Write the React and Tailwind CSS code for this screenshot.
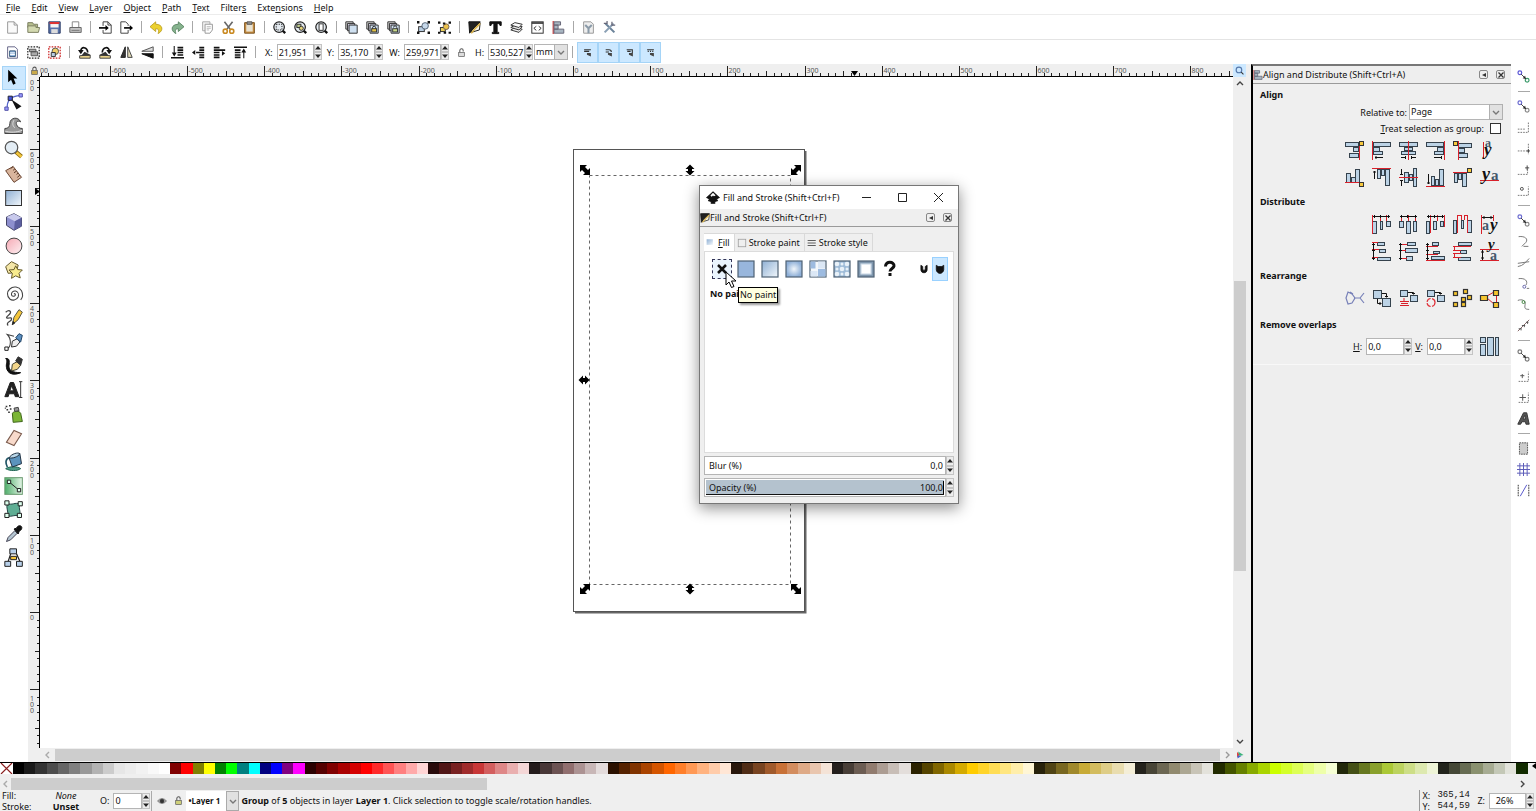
import { useState } from "react";
import clsx from "clsx";

const PALETTE = (
  "000000 1a1a1a 333333 4d4d4d 666666 808080 999999 b3b3b3 cccccc e6e6e6 ececec f2f2f2 f9f9f9 ffffff " +
  "800000 ff0000 808000 ffff00 008000 00ff00 008080 00ffff 000080 0000ff 800080 ff00ff " +
  "2b0000 550000 800000 aa0000 d40000 ff0000 ff2a2a ff5555 ff8080 ffaaaa ffd5d5 " +
  "280b0b 501616 782121 a02c2c c83737 d35f5f de8787 e9afaf f4d7d7 " +
  "241c1c 483737 6c5353 916f6f ac9393 c8b7b7 e3dbdb " +
  "2b1100 552200 803300 aa4400 d45500 ff6600 ff7f2a ff9955 ffb380 ffccaa ffe6d5 " +
  "28170b 502d16 784421 a05a2c c87137 d38d5f deaa87 e9c6af f4e3d7 " +
  "241f1c 483e37 6c5d53 917c6f ac9d93 c8beb7 e3dedb " +
  "2b2200 554400 806600 aa8800 d4aa00 ffcc00 ffd42a ffdd55 ffe680 ffeeaa fff6d5 " +
  "28220b 504416 786721 a0892c c8ab37 d3bc5f decd87 e9ddaf f4eed7 " +
  "24221c 484537 6c6753 918a6f aca793 c8c4b7 e3e2db " +
  "222b00 445500 668000 88aa00 aad400 ccff00 d4ff2a ddff55 e5ff80 eeffaa f6ffd5 " +
  "22280b 445016 677821 89a02c abc837 bcd35f cdde87 dde9af eef4d7 " +
  "22241c 454837 676c53 8a916f a7ac93 c4c8b7 e2e3db 112b00"
).split(" ");

const MENUS = [
  ["", "F", "ile"],
  ["", "E", "dit"],
  ["", "V", "iew"],
  ["", "L", "ayer"],
  ["", "O", "bject"],
  ["", "P", "ath"],
  ["", "T", "ext"],
  ["Filter", "s", ""],
  ["Exte", "n", "sions"],
  ["", "H", "elp"],
];

// ---------- icon helpers ----------

function Svg({ children, className = "w-[13px] h-[13px]", box = 16 }) {
  return (
    <svg viewBox={`0 0 ${box} ${box}`} className={clsx("shrink-0 overflow-visible", className)} fill="none" stroke="#333" strokeWidth="1.2">
      {children}
    </svg>
  );
}

const Padlock = ({ fill = "#c9a94a", open }) => (
  <Svg className="w-[9px] h-[9px]">
    <path d={open ? "M5 8V4.500a3 3 0 0 1 6 0V6" : "M5 8V5a3 3 0 0 1 6 0v3"} stroke="#555" strokeWidth="1.800" />
    <rect x="3" y="8" width="10" height="7" fill={fill} stroke="#555" />
  </Svg>
);

const magnifier = (inner) => (
  <>
    <circle cx="7.500" cy="7.500" r="6.500" fill="#e4eaf0" stroke="#222" strokeWidth="1.500" />
    {inner}
    <path d="M12 12l3 3" stroke="#111" strokeWidth="3" />
  </>
);

const stackedSquares = (inner) => (
  <>
    <path d="M1 1h9v9H1z" fill="#ddd" />
    <path d="M3 3h9v9H3z" fill="#ccd" />
    <path d="M5 5h10v10H5z" fill="#cfe0f0" />
    {inner}
  </>
);

const rotateArt = (flip) => (
  <g transform={flip ? "translate(16 0) scale(-1 1)" : undefined}>
    <path d="M2 15v-3l13-1v4z" fill="#e8d28a" stroke="#444" />
    <path d="M4 12l4-5 6 3 1 2z" fill="#333" stroke="none" />
    <path d="M3.500 6c0-6 8-5 8.500 2" stroke="#111" strokeWidth="2" />
    <path d="M0 5h7l-3.500 5z" fill="#111" stroke="none" />
  </g>
);

const commandIcons = [
  ["New", <><path d="M2 1h8l4 4v10H2z" fill="#fafafa" stroke="#999" /><path d="M10 1v4h4" stroke="#999" /></>],
  ["Open", <><path d="M1 2h6l1 2h5v4H1z" fill="#b7bf8e" stroke="#7b7f62" /><path d="M1 14V6h10v2h4.500L14 14z" fill="#d3d9b0" stroke="#7b7f62" /></>],
  ["Save", <><path d="M1 1h14v14H1z" fill="#5873ab" stroke="#2a3b66" /><path d="M3 2h10v6H3z" fill="#f4f4f4" stroke="none" /><path d="M2 2.500h12" stroke="#d33" strokeWidth="2.500" /><path d="M4 10h8v5H4z" fill="#ddd" stroke="none" /></>],
  ["Print", <><path d="M4 8V1h8v7" fill="#fff" stroke="#888" /><path d="M1 8h14v6H1z" fill="#c5c5c5" stroke="#666" /><path d="M3 11.500h10" stroke="#777" /></>],
  null,
  ["Import", <><path d="M5 1h6l4 4v10H5V11M5 6V1M11 1v4h4" stroke="#444" /><path d="M0 8.500h9" stroke="#000" strokeWidth="2" /><path d="M8 5l4 3.500L8 12z" fill="#000" stroke="none" /></>],
  ["Export", <><path d="M10 11v4H1V1h6l3 3v2" stroke="#444" /><path d="M5 8.500h8" stroke="#000" strokeWidth="2" /><path d="M12 5l4 3.500L12 12z" fill="#000" stroke="none" /></>],
  null,
  ["Undo", <path d="M7 1L0 7l7 6v-3.500c4 0 4 2 3 6C17 12 16 4 7 4z" fill="#ecd12f" stroke="#b89a1b" strokeWidth="1" />],
  ["Redo", <path d="M9 1l7 6-7 6v-3.500c-4 0-4 2-3 6C-1 12 0 4 9 4z" fill="#86b38e" stroke="#4d7a56" strokeWidth="1" />],
  null,
  ["Copy", <><path d="M2 1h9v11H2z" fill="#f2f2f2" stroke="#aaa" /><path d="M5 4h9v7l-3 4H5z" fill="#fff" stroke="#999" /><path d="M7 7h5M7 9h5M7 11h3" stroke="#bbb" /></>],
  ["Cut", <><path d="M3 1l7 9M13 1L6 10" stroke="#666" strokeWidth="2" /><circle cx="4" cy="12.500" r="2.500" stroke="#c98a22" strokeWidth="2" /><circle cx="12" cy="12.500" r="2.500" stroke="#c98a22" strokeWidth="2" /></>],
  ["Paste", <><path d="M2 2h12v13H2z" fill="#c98f42" stroke="#7a5320" /><path d="M4 4h8v9H4z" fill="#e8e2d2" stroke="none" /><path d="M5 1h6v3H5z" fill="#999" stroke="#555" /></>],
  null,
  ["Zoom selection", magnifier(<rect x="4" y="4" width="7" height="7" stroke="#222" strokeDasharray="1.500 1.500" />)],
  ["Zoom drawing", magnifier(<><rect x="3.500" y="4" width="5" height="4" fill="#bcc88a" /><circle cx="9" cy="9" r="2.500" fill="#e5d47b" /></>)],
  ["Zoom page", magnifier(<rect x="5" y="3.500" width="5" height="8" fill="#fff" />)],
  null,
  ["Duplicate", stackedSquares(null)],
  ["Clone", stackedSquares(<><path d="M8 10V8.500a2 2 0 0 1 4 0V10" /><rect x="7" y="9.500" width="6" height="4" fill="#e2c347" /></>)],
  ["Unlink clone", stackedSquares(<><path d="M8 8a2 2 0 0 1 4 0v2" /><rect x="7" y="9.500" width="6" height="4" fill="#c9d98b" /></>)],
  null,
  ["Group", <><rect x="2" y="7" width="7" height="6" fill="#b8cde2" /><circle cx="10" cy="6" r="4" fill="#c6d8ea" stroke="#567" /><path d="M0 1.500h3M13 1.500h3M0 14.500h3M13 14.500h3" strokeWidth="3" stroke="#111" /></>],
  ["Ungroup", <><rect x="3" y="8" width="6" height="5" fill="#e9cf5a" /><circle cx="10" cy="7" r="3.500" fill="#edc24a" stroke="#765" /><path d="M0 2h3M6 3h3M13 2h3M0 14.500h3M7 14.500h3M13 14.500h3" strokeWidth="2.500" stroke="#111" /></>],
  null,
  ["Fill and Stroke", <><path d="M4 2h11l-1 9-10 3z" fill="#f8f6ea" stroke="#222" /><path d="M1 1h14L6 10l-4 5z" fill="#222" stroke="#111" /><path d="M15 3L9 9l-5 6" stroke="#d9b24a" strokeWidth="2" /></>],
  ["Text and Font", <path d="M1 1h14v4.500h-1.500C13 3.500 12 3 10 3v9.500c0 1 .5 1.500 2 1.500v1.500H4V14c1.500 0 2-.5 2-1.500V3C4 3 3 3.500 2.500 5.500H1z" fill="#111" stroke="#111" />],
  ["Layers", <><path d="M1 11l5-3 9 2-4 4z" fill="#eee" /><path d="M1 8l5-3 9 2-4 4z" fill="#e4e4e4" /><path d="M1 5l5-3 9 2-4 4z" fill="#fafafa" /></>],
  ["XML Editor", <><rect x="1" y="1" width="14" height="14" fill="#fff" /><path d="M1 2.500h14" strokeWidth="2" /><path d="M6.500 6.500L3.500 9l3 2.500M9.500 6.500l3 2.500-3 2.500" /></>],
  ["Align and Distribute", <><path d="M1.500 0v16" stroke="#c33" strokeWidth="1.500" /><path d="M2.500 1h8v4h-8zM2.500 5h5v5h-5zM2.500 10h12v5h-12z" fill="#a8b6c2" stroke="#667" /></>],
  null,
  ["Document Properties", <><path d="M2 1h9l3 3v11H2z" fill="#eee" stroke="#999" /><path d="M4 5l4 4 4-4M8 9v6" stroke="#8a9aa8" strokeWidth="2.500" /></>],
  ["Preferences", <><path d="M3 3l11 11" stroke="#6b8299" strokeWidth="2.500" /><path d="M13 3L2 14" stroke="#8aa0b5" strokeWidth="2.500" /><path d="M11 1v4h4M1 3h4V0" stroke="#667" strokeWidth="1.500" /></>],
];

const rows = (d) => <path d={d} stroke="#111" strokeWidth="2" />;

const selectIcons = [
  ["Select all", <><path d="M2 1h9l3 3v11H2z" fill="#fff" stroke="#668" /><path d="M4.500 6h7v7h-7z" fill="#8fb4de" stroke="#357" /><path d="M5 8.500h6M5 10.500h6" stroke="#fff" /></>],
  ["Select all layers", <><rect x="1" y="1" width="14" height="14" strokeDasharray="2 1.500" stroke="#222" strokeWidth="1.500" /><path d="M3 4h8v3H3zM5 7h8v5H5z" fill="#aaa" stroke="#555" /></>],
  ["Deselect", <><rect x="1" y="1" width="14" height="14" strokeDasharray="2 1.500" stroke="#c22" strokeWidth="1.500" /><circle cx="9" cy="6.500" r="4" fill="#f0cf6a" stroke="#555" /><path d="M4 13V8h5v5z" fill="#b8cde2" /></>],
  null,
  ["Rotate 90 CCW", rotateArt(false)],
  ["Rotate 90 CW", rotateArt(true)],
  ["Flip horizontal", <><path d="M6.500 1v13H1z" fill="#333" stroke="#222" /><path d="M9.500 1v13H15z" fill="#e3dcb8" stroke="#444" /></>],
  ["Flip vertical", <><path d="M15 6.500V1L1 6.500z" fill="#ddd" stroke="#555" /><path d="M15 9.500V15L1 9.500z" fill="#111" stroke="#111" /></>],
  null,
  ["Lower to bottom", <>{rows("M8 2h7M8 5h7M8 8h7M8 11h7M0 14.500h16")}<path d="M4 0v10" strokeWidth="1.500" /><path d="M1 8h6l-3 5z" fill="#111" stroke="none" /></>],
  ["Lower", <>{rows("M9 2h6M9 5h6M5 8h10M9 11h6M9 14h6")}<path d="M0 8l4-3v6z" fill="#111" stroke="none" /></>],
  ["Raise", <>{rows("M1 2h7M1 5h14M1 8h7M1 11h7M1 14h7")}<path d="M11 12l4-3-4-3z" fill="#111" stroke="none" /></>],
  ["Raise to top", <>{rows("M0 1.500h16M1 5h7M1 8h7M1 11h7M1 14h7")}<path d="M12 6v9" strokeWidth="1.500" /><path d="M9 8h6l-3-5z" fill="#111" stroke="none" /></>],
];

const affectIcons = [
  ["Scale stroke width", "M2 3h12M2 6h9"],
  ["Scale rounded corners", "M3 3h6a4 4 0 0 1 4 4M3 7h6"],
  ["Move gradients", "M3 3h10v6M4 6h6"],
  ["Move patterns", "M2 3h12M3 6h2M7 6h2M11 6h2"],
];

const toolIcons = [
  ["Select", <path d="M5 2v15l3.500-3 2.500 6 3-1.300-2.500-6H16z" fill="#000" stroke="none" />],
  ["Edit nodes", <><path d="M4 20C3 10 8 5 20 4" stroke="#5566cc" strokeWidth="1.500" /><path d="M5 5h5v5H5z" fill="#4455dd" stroke="#223" /><path d="M1 18h4v4H1zM18 2h4v4h-4z" fill="#99f" stroke="#55a" /><path d="M9 9l12 8-6 4z" fill="#111" stroke="none" /></>],
  ["Tweak", <><path d="M1 21v-6c4 0 6-2 6-6 0-7 10-9 13-2-4-2-6 0-5 3s3 5 7 5v6z" fill="#999" stroke="#444" /><path d="M1 18c6 2 14 2 21-1M12 5c-2 3-2 7 1 9" stroke="#ddd" /></>],
  ["Zoom", <><path d="M14 14l7 6" stroke="#8a6a10" strokeWidth="5" /><path d="M15 15l6 5" stroke="#f2c53d" strokeWidth="3" /><circle cx="9" cy="9" r="7.500" fill="#e3edf5" stroke="#555" strokeWidth="1.500" /></>],
  ["Measure", <><path d="M2 8l9-5 10 13-9 6z" fill="#d9b59d" stroke="#6b4531" /><path d="M11 3l-3 2.500M13 6l-2 1.500M15 8.500l-3 2M17 11l-2 1.500M19 13.500l-3 2.500" stroke="#5b3a28" /></>],
  ["Rectangle", <rect x="2" y="3" width="19" height="18" fill="url(#blueGrad)" stroke="#333" />],
  ["3D box", <><path d="M3 6l9-4 9 5v10l-9 5-9-6z" fill="#8d8fce" stroke="#446" /><path d="M3 6l9-4 9 5-8 4z" fill="#c9caec" stroke="none" /><path d="M13 11l8-4v10l-9 5z" fill="#5c5f9f" stroke="none" /></>],
  ["Ellipse", <circle cx="12" cy="12" r="9.500" fill="url(#pinkGrad)" stroke="#444" strokeWidth="1.200" />],
  ["Star", <><path d="M2 8l7-6 8 4-2 9-10 1z" fill="#f5e7a8" stroke="#665a2a" /><path d="M14 7l2.500 4.500 5.500.5-4 4 1.500 5.500-5.500-2.500-5 3 1-6-4-4 6-.5z" fill="#f8ec8e" stroke="#665a2a" /></>],
  ["Spiral", <path d="M12 12c1-1 2 0 1.500 1.500-1 2-4 1.500-4.500-.5-.5-3 2-5 5-4.500 3 1 4 4 3 7-2 4-7 5-10 2.500-4-3.500-3.500-9 0-12 4-4 11-3 14 2 2 4 1.500 8-1 11" stroke="#444" strokeWidth="1.300" />],
  ["Pencil", <><path d="M2 5c5-4 8 0 4 3s-4 5 0 4 4 2 1 4-4 3-2 5" stroke="#444" strokeWidth="1.500" /><path d="M10 20l2-9 6-9 4 3-5 9z" fill="#f4c53a" stroke="#554" /><path d="M10 20l1-4 2 2z" fill="#111" /></>],
  ["Bezier", <><path d="M3 20C9 19 9 8 4 3l8 2" stroke="#444" strokeWidth="1.300" /><path d="M1 18h4v4H1z" fill="#fff" stroke="#222" /><path d="M9 18l1-7 6-3 3 4-4 5z" fill="#eee" stroke="#333" /><path d="M14 7l4-5 4 2-2 8z" fill="#5b8fc0" stroke="#246" /></>],
  ["Calligraphy", <><path d="M2 3c6-1 4 6 4 10s4 7 14 7c-9 4-16 1-17-6C2 9 5 6 2 3z" fill="#111" stroke="#111" /><path d="M9 18l1-8 7-4 3 5-4 5z" fill="#f2d58a" stroke="#443" /><path d="M14 6l3-5 5 3-2 7z" fill="#333" /></>],
  ["Text", <><path d="M1 20L7.500 3h4L18 20h-4.500l-1-3.500H6L5 20zM7 13h4.500L9.300 6.500z" fill="#222" stroke="#222" /><path d="M18 2h4M20 2v19M18 21h4" stroke="#333" /></>],
  ["Spray", <><path d="M10 11c3-3 8-3 10 0l2 10-11 1z" fill="#7cb636" stroke="#3f661b" /><path d="M12 5l5-1 1 4-5 1z" fill="#999" stroke="#444" /><path d="M2 3h2M6 2h2M3 7h2M7 6h2M5 10h2M1 5h1" stroke="#333" strokeWidth="1.800" /></>],
  ["Eraser", <path d="M3 17L12 3l9 4-9 14z" fill="#f8dacb" stroke="#7a5a4c" strokeWidth="1.300" />],
  ["Paint bucket", <><path d="M2 20c4-3 15-3 18 0-4 3-13 3-18 0z" fill="#4f9a86" stroke="#265" /><path d="M6 7l13-5 2 12-11 4z" fill="#5b93bd" stroke="#234" /><path d="M6 7C1 9 2 14 4 18" stroke="#256" strokeWidth="2" /><path d="M6 7c3-5 11-7 13-5-2 4-9 6-13 5z" fill="#b9d6e8" stroke="#234" /></>],
  ["Gradient", <><rect x="1" y="2" width="21" height="20" fill="url(#greenGrad)" stroke="#6a9a70" /><path d="M6 7l12 10" stroke="#222" /><path d="M4 5h4v4H4zM16 15h4v4h-4z" fill="#dfe" stroke="#222" /></>],
  ["Mesh", <><path d="M4 4c6 3 9-2 15 1-2 6 2 9-1 14-5-2-9 2-14 0 2-5-2-9 0-15z" fill="#5fae94" stroke="#244" /><path d="M1 1h5v5H1zM17 2h5v5h-5zM1 16h5v5H1zM16 16h5v5h-5z" fill="#dfe" stroke="#222" /></>],
  ["Dropper", <><path d="M3 21l2-5 8-8 3 3-8 8z" fill="#b5c6d2" stroke="#445" /><path d="M12 6l3-1c2-5 8-3 6 1-1 2-2 2-3 3l-1 3z" fill="#111" stroke="#111" /></>],
  ["Connector", <><path d="M8 7L5 16M15 7l4 9" stroke="#222" strokeWidth="1.500" /><path d="M7 1h8v6H7zM1 16h7v6H1zM15 16h7v6h-7z" fill="#b8d0ea" stroke="#222" /><path d="M8 10h7v4H8z" fill="#f3c33b" stroke="#222" /></>],
];

const dots = (d) => <path d={d} stroke="#777" strokeDasharray="2 1.300" />;
const nodePair = (a, b) => (
  <>
    <circle cx="3.500" cy="3.500" r="2.300" stroke={a} strokeWidth="1.500" />
    <circle cx="12.500" cy="12.500" r="2.300" stroke={b} strokeWidth="1.500" />
    <path d="M5 5l6 6" stroke="#444" />
    <path d="M10 7l1 4-4-1z" fill="#222" stroke="none" />
  </>
);

const snapIcons = [
  ["Enable snapping", nodePair("#5a55d6", "#3a9a6a")],
  null,
  ["Snap bounding boxes", nodePair("#6a6ad0", "#888")],
  ["Snap to edges", dots("M1 14h13V1M1 10h9")],
  ["Snap to corners", <>{dots("M1 11h13V1M14 11v4")}<path d="M12 11h4M14 9v4" stroke="#444" /></>],
  ["Snap edge midpoints", <>{dots("M1 14h12V8")}<path d="M10 6h5M12.500 3v6" stroke="#444" /></>],
  ["Snap centers", <>{dots("M1 14h13V3")}<circle cx="6" cy="6" r="1.800" stroke="#555" /></>],
  null,
  ["Snap nodes", nodePair("#6a6ad0", "#888")],
  ["Snap to paths", <path d="M2 2c8-1 12 3 9 7l-5 5M8 14h6" stroke="#777" />],
  ["Snap intersections", <path d="M1 13C8 12 10 8 15 3M1 9l14-2" stroke="#777" />],
  ["Snap cusp nodes", <><path d="M2 2c8-1 12 3 9 8M12 14h3" stroke="#777" /><circle cx="9" cy="12" r="1.800" stroke="#66a" /></>],
  ["Snap smooth nodes", <><path d="M1 3c5-2 10 0 9 5s0 6 5 6" stroke="#777" /><circle cx="8" cy="5" r="1.800" stroke="#484" /></>],
  ["Snap line midpoints", <><path d="M1 15L15 1" stroke="#866" /><path d="M2 12h3M6 8h4M11 4h3M5 14v-3M9 10V7M13 6V3" stroke="#555" /></>],
  null,
  ["Snap others", nodePair("#777", "#777")],
  ["Snap object centers", <>{dots("M2 14h12V2")}<path d="M4 7h5M6.500 5v5" stroke="#555" /></>],
  ["Snap rotation centers", <>{dots("M2 14h12V2")}<path d="M3 8h8M7 4v8" stroke="#555" /></>],
  ["Snap text baseline", <path d="M1 15L8 1h4l3 14h-4l-.5-3H6l-1.500 3zM7.500 8.500h3L9.600 4z" fill="#555" stroke="#333" />],
  null,
  ["Snap page border", <rect x="3" y="1" width="10" height="14" fill="#ccc" stroke="#555" strokeDasharray="2 1" />],
  ["Snap to grids", <path d="M0 3.500h16M0 8h16M0 12.500h16M3.500 0v16M8 0v16M12.500 0v16" stroke="#5a5ab8" strokeWidth="1.200" />],
  ["Snap to guides", <><path d="M1.500 1v14M14.500 1v14" stroke="#333" strokeDasharray="2 1" /><path d="M4 15l8-14" stroke="#55c" /></>],
];

// Bars, guide line, arrows and an anchor square: all the align glyphs share these
function BarIcon({ bars = [], red, black, anchor, children }) {
  return (
    <Svg className="w-[19px] h-[19px]" box={19}>
      {bars.map(([x, y, w, h], i) => (
        <rect key={i} x={x + 0.5} y={y + 0.5} width={w - 1} height={h - 1} fill="#bcd3e6" stroke="#35424d" strokeWidth="1" />
      ))}
      {red && <path d={red} stroke="#d8202a" strokeWidth="1" />}
      {black && <path d={black} stroke="#111" strokeWidth="1" />}
      {anchor && <rect x={anchor[0] + 0.5} y={anchor[1] + 0.5} width="4" height="4" fill="#f8c93c" stroke="#333" strokeWidth="1" />}
      {children}
    </Svg>
  );
}

const glyph = (ch, x, y, italic, size = 15) => (
  <text x={x} y={y} fontSize={size} fontWeight="bold" fontStyle={italic ? "italic" : "normal"} fontFamily="Liberation Serif, serif" fill={ch === "a" ? "#44586b" : "#111"} stroke="none">
    {ch}
  </text>
);

const alignRows = [
  [
    <BarIcon bars={[[0, 1, 14, 5], [8, 6, 6, 5], [4, 12, 10, 5]]} red="M14.500 0v19" anchor={[14, 0]} />,
    <BarIcon bars={[[1, 1, 18, 5], [1, 6, 7, 5], [1, 10, 10, 4]]} red="M.5 0v19" black="M3 16.500h8M4 15v3" />,
    <BarIcon bars={[[0, 1, 19, 5], [5, 6, 9, 4], [2, 10, 15, 4]]} red="M9.500 0v19" black="M2 16.500h5M12 16.500h5M6.500 15v3M12.500 15v3" />,
    <BarIcon bars={[[0, 1, 18, 5], [11, 6, 7, 5], [8, 10, 10, 4]]} red="M18.500 0v19" black="M8 16.500h8M15.500 15v3" />,
    <BarIcon bars={[[5, 2, 14, 5], [5, 7, 7, 5], [5, 12, 10, 5]]} red="M5.500 0v19" anchor={[0, 0]} />,
    <BarIcon red="M3.500 1v16">{glyph("a", 5, 6, false, 12)}{glyph("y", 4, 14, true, 17)}</BarIcon>,
  ],
  [
    <BarIcon bars={[[1, 5, 5, 10], [6, 9, 5, 6], [10, 1, 5, 14]]} red="M0 14.500h15" anchor={[14, 14]} />,
    <BarIcon bars={[[5, 1, 4, 10], [9, 1, 4, 7], [13, 1, 5, 17]]} red="M0 .5h19" black="M2.500 3v8M1 4h3" />,
    <BarIcon bars={[[5, 4, 5, 11], [10, 6, 4, 7], [14, 0, 4, 19]]} red="M0 9.500h19" black="M2.500 1v6M2.500 12v6M1 6.500h3M1 12.500h3" />,
    <BarIcon bars={[[5, 8, 4, 10], [9, 11, 4, 7], [13, 1, 5, 17]]} red="M0 18.500h19" black="M2.500 6v10M1 15h3" />,
    <BarIcon bars={[[1, 5, 4, 10], [5, 5, 4, 7], [9, 5, 5, 14]]} red="M0 4.500h15" anchor={[14, 0]} />,
    <BarIcon red="M0 12.500h19">{glyph("y", 2, 12, true, 18)}{glyph("a", 11, 12, false, 15)}</BarIcon>,
  ],
];

const harrow = "M1 1.500h17M2.500 0v3M16.500 0v3M8.500 0v3";
const varrow = "M1.500 1v17M0 2.500h3M0 16.500h3M0 8.500h3";
const distributeRows = [
  [
    <BarIcon bars={[[0, 6, 5, 13], [8, 6, 3, 9], [14, 6, 5, 6]]} red="M.5 0v19M8.500 0v6M14.500 0v6" black={harrow} />,
    <BarIcon bars={[[0, 6, 5, 7], [7, 6, 5, 13], [14, 6, 4, 11]]} red="M2.500 0v6M9.500 0v6M16.500 0v6" black={harrow} />,
    <BarIcon bars={[[0, 6, 4, 13], [7, 6, 4, 9], [14, 6, 4, 6]]} red="M4.500 0v18M11.500 0v6M18.500 0v12" black={harrow} />,
    <BarIcon bars={[[0, 5, 4, 14], [8, 5, 3, 9], [14, 5, 5, 13]]} red="M4.500 0v18M8.500 0v5M11.500 0v5M14.500 0v18M4 .5h4M11 .5h4" />,
    <BarIcon red="M1.500 0v19M13.500 0v6" black="M2 2.500h11M4 1v3M11 1v3">{glyph("a", 2, 15, false, 14)}{glyph("y", 10, 15, true, 17)}</BarIcon>,
  ],
  [
    <BarIcon bars={[[5, 0, 8, 4], [7, 7, 7, 4], [5, 15, 14, 4]]} red="M0 .5h6M0 7.500h7M0 15.500h6" black={varrow} />,
    <BarIcon bars={[[8, 0, 9, 4], [6, 6, 13, 5], [7, 14, 7, 5]]} red="M0 2.500h8M0 8.500h7M0 16.500h8" black={varrow} />,
    <BarIcon bars={[[6, 0, 7, 4], [7, 9, 7, 3], [5, 14, 14, 4]]} red="M0 4.500h12M0 12.500h12M0 18.500h19" black={varrow} />,
    <BarIcon bars={[[5, 0, 14, 4], [7, 8, 7, 4], [5, 15, 13, 4]]} red="M0 4.500h18M0 8.500h8M0 11.500h8M0 15.500h8M1.500 4v4M1.500 12v3" />,
    <BarIcon red="M0 7.500h19M0 18.500h19" black="M2.500 8v10M1 10h3M1 16h3">{glyph("y", 8, 7, true)}{glyph("a", 10, 18, false, 14)}</BarIcon>,
  ],
];

const rearrangeIcons = [
  <BarIcon><path d="M1 9l2-6 4 2 3 4-3 5-4 1zM9 9h6l4-5M15 9l4 5M5 3l3 2" stroke="#7780b8" /></BarIcon>,
  <BarIcon bars={[[1, 1, 9, 9], [10, 9, 9, 9]]} black="M5.500 10v4.500h4M10 4.500h4.500v4M8 13v3M13 7.500h3" />,
  <BarIcon bars={[[1, 1, 8, 7], [11, 6, 8, 7]]} black="M9 3.500h5.500v2M13 4.500h3" red="M5 9v3M1 12.500h9M2 14.500h7M1 16.500h9" />,
  <BarIcon bars={[[1, 1, 8, 7], [11, 6, 8, 7]]} black="M9 3.500h5.500v2M13 4.500h3"><circle cx="5" cy="13.500" r="4" stroke="#e03038" strokeDasharray="5 1.500" /></BarIcon>,
  <BarIcon>{[[0, 2], [10, 0], [8, 8], [14, 6], [0, 13], [8, 13]].map(([x, y]) => <rect key={x + "-" + y} x={x + 0.5} y={y + 0.5} width="4" height="4" fill="#f6c52e" stroke="#333" />)}</BarIcon>,
  <BarIcon red="M7 7l7-4M7 9l7 6M16.500 5v9"><path d="M.5 6.500h7v5h-7zM13.500 1.500h5v5h-5zM13.500 13.500h5v5h-5z" fill="#f6c52e" stroke="#333" /></BarIcon>,
];

// ---------- controls ----------

function Tri({ up }) {
  return (
    <svg viewBox="0 0 6 4" className="w-[6px] h-[4px] shrink-0" fill="#222">
      <path d={up ? "M3 0l3 3.500H0z" : "M3 4l3-3.500H0z"} />
    </svg>
  );
}

function Chevron({ dir = "down", color = "#777" }) {
  const d = { down: "M1 3l3 3 3-3", up: "M1 5l3-3 3 3", left: "M5 1L2 4l3 3", right: "M3 1l3 3-3 3" }[dir];
  return (
    <svg viewBox="0 0 8 8" className="w-2 h-2 pointer-events-none" fill="none" stroke={color} strokeWidth="1.400">
      <path d={d} />
    </svg>
  );
}

function Spinner() {
  return (
    <span className="flex w-2 shrink-0 flex-col self-stretch">
      {["Increase", "Decrease"].map((name) => (
        <button key={name} aria-label={name} className="flex flex-1 items-center justify-center border border-[#c4c4c4] bg-[#ececec]">
          <Tri up={name === "Increase"} />
        </button>
      ))}
    </span>
  );
}

function SpinField({ id, label, value, width = "w-[37px]", height = "h-4", className }) {
  return (
    <div className={clsx("flex items-center gap-1", className)}>
      <label htmlFor={id}>{label}</label>
      <div className={clsx("flex", height)}>
        <input id={id} defaultValue={value} className={clsx("min-w-0 border border-[#b5b5b5] bg-white pl-px outline-none", width)} />
        <Spinner />
      </div>
    </div>
  );
}

function Select({ id, value, width, className, ...rest }) {
  return (
    <div className={clsx("relative flex h-4", width, className)}>
      <select id={id} defaultValue={value} className="h-full w-full appearance-none border border-[#b5b5b5] bg-white pl-px leading-[14px] outline-none" {...rest}>
        <option>{value}</option>
      </select>
      <span className="pointer-events-none absolute inset-y-0 right-0 flex w-3.5 items-center justify-center border border-[#b0b0b0] bg-[#e1e1e1]">
        <Chevron />
      </span>
    </div>
  );
}

function IconButtons({ items, vertical }) {
  return items.map((item, i) =>
    item ? (
      <button key={i} aria-label={item[0]} className="flex h-[21px] w-[21px] shrink-0 items-center justify-center">
        <Svg>{item[1]}</Svg>
      </button>
    ) : (
      <Divider key={i} vertical={vertical} />
    )
  );
}

function Divider({ vertical }) {
  return (
    <span className={clsx("flex shrink-0 items-center justify-center", vertical ? "h-[9px] w-full" : "h-full w-[9px]")}>
      <span className={clsx("bg-[#a8a8a8]", vertical ? "h-px w-3" : "h-3 w-px")} />
    </span>
  );
}

function DockHeader({ title, icon }) {
  return (
    <div className="flex h-[18px] items-center border-b border-[#9a9a9a] pr-1.5">
      <Svg className="w-[10px] h-[10px]">{icon}</Svg>
      <span className="flex-1 whitespace-nowrap">{title}</span>
      <button aria-label="Iconify" className="mr-2 flex h-[9px] w-[9px] items-center justify-center rounded-xs border border-[#888]">
        <svg viewBox="0 0 4 4" className="h-1 w-1"><path d="M4 0v4L0 2z" fill="#333" /></svg>
      </button>
      <button aria-label="Close dock" className="flex h-[9px] w-[9px] items-center justify-center rounded-xs border border-[#888]">
        <svg viewBox="0 0 6 6" className="h-1.5 w-1.5 shrink-0"><path d="M.5.5l5 5M5.500.5l-5 5" stroke="#333" strokeWidth="1.300" /></svg>
      </button>
    </div>
  );
}

// ---------- rulers ----------

const UNIT = 7.717; // pixels per 10 mm at 26% zoom

const tickLength = (n) => (n % 10 === 0 ? 10 : n % 5 === 0 ? 5 : 3);

function HorizontalRuler() {
  const ticks = [];
  for (let n = -69; n <= 85; n++) ticks.push(n);
  return (
    <svg className="h-[13px] w-full shrink-0 bg-[#efefef]" fontFamily="Noto Sans, sans-serif" fontSize="7">
      {ticks.map((n) => {
        const x = Math.round(533 + n * UNIT) + 0.5;
        return (
          <g key={n}>
            <path d={`M${x} 12v-${tickLength(n)}`} stroke="#222" />
            {n % 10 === 0 && <text x={x + 1} y="9" fill="#555">{n * 10}</text>}
          </g>
        );
      })}
      <text x="0" y="9" fill="#555">00</text>
      <path d="M811 7h7l-3.500 5z" fill="#000" />
      <rect y="12" width="100%" height="1" fill="#000" />
    </svg>
  );
}

function VerticalRuler() {
  const ticks = [];
  for (let n = -17; n <= 69; n++) ticks.push(n);
  return (
    <svg className="w-3 min-h-0 flex-1 bg-[#efefef]" fontFamily="Noto Sans, sans-serif" fontSize="7">
      {ticks.map((n) => {
        const y = Math.round(535 - n * UNIT) + 0.5;
        return (
          <g key={n}>
            <path d={`M12 ${y}h-${tickLength(n)}`} stroke="#222" />
            {n % 10 === 0 &&
              String(Math.abs(n * 10)).split("").map((ch, i) => (
                <text key={i} x="2" y={y + 7 + i * 6 + (n < 0 ? 4 : 0)} fill="#555">{ch}</text>
              ))}
          </g>
        );
      })}
      <text x="2" y="8" fill="#555">0</text>
      <text x="2" y="14" fill="#555">0</text>
      <path d="M7 111v7l5-3.500z" fill="#000" />
      <rect x="11" width="1" height="100%" fill="#000" />
    </svg>
  );
}

// ---------- canvas ----------

const DIAGONAL = "M-5-5H2L0-3 3 0 5-2V5H-2L0 3-3 0-5 2z";
const UPDOWN = "M0-5.500l4.500 4.500h-2.500v2h2.500l-4.500 4.500-4.500-4.500h2.500v-2h-2.500z";
const HANDLES = [
  [545, 93, DIAGONAL, 0],
  [756, 93, DIAGONAL, 90],
  [545, 512, DIAGONAL, 90],
  [756, 512, DIAGONAL, 0],
  [650, 93, UPDOWN, 0],
  [650, 512, UPDOWN, 0],
  [544, 303, UPDOWN, 90],
  [756, 303, UPDOWN, 90],
];

function Artwork() {
  return (
    <svg className="absolute inset-0 h-full w-full">
      <path d="M535 535.500h230.500V74" fill="none" stroke="#666" strokeWidth="2" />
      <rect x="533.5" y="72.500" width="231" height="462" fill="#fff" stroke="#555" />
      <rect x="549.5" y="98.500" width="201" height="409" fill="none" stroke="#666" strokeDasharray="3 3" />
      {HANDLES.map(([x, y, d, r]) => (
        <path key={`${x}-${y}`} d={d} transform={`translate(${x} ${y}) rotate(${r})`} />
      ))}
    </svg>
  );
}

const B = "#4f6274";
const paintTypes = [
  ["No paint", <path d="M6 6l8 8M14 6l-8 8" stroke="#111" strokeWidth="2.500" />],
  ["Flat color", <rect x="2" y="2" width="16" height="16" fill="#98b6dc" stroke={B} />],
  ["Linear gradient", <rect x="2" y="2" width="16" height="16" fill="url(#blueGrad)" stroke={B} />],
  ["Radial gradient", <rect x="2" y="2" width="16" height="16" fill="url(#radGrad)" stroke={B} />],
  ["Mesh gradient", <><rect x="2" y="2" width="16" height="16" fill="#f3f7fb" stroke={B} /><path d="M2.500 2.500h5v7h-5zM10 10h7.500v7.500H10z" fill="#9dbbe0" stroke="none" /><path d="M10 2.500h7v7h-7zM2.500 12h7v5.500h-7z" fill="#dbe7f5" stroke="none" /></>],
  ["Pattern", <><rect x="2" y="2" width="16" height="16" fill="#9fbcd8" stroke={B} />{[5, 10, 15].map((x) => [5, 10, 15].map((y) => <circle key={x + "-" + y} cx={x} cy={y} r={(x + y) % 2 ? 1.5 : 2.3} fill="#e8f1f8" stroke="none" />))}</>],
  ["Swatch", <><rect x="2" y="2" width="16" height="16" fill="#7f97ae" stroke={B} /><rect x="5" y="5" width="10" height="10" fill="#fff" stroke="#cfdde9" /></>],
  ["Unset paint", <path d="M5.500 7.500c0-6 9-5 8.500-.5-.3 2.500-4 2.500-4 5.500M8.500 15.500h3" stroke="#111" strokeWidth="3" />],
];

function FillStrokeDialog() {
  const [tab, setTab] = useState("fill");
  const tabs = [
    ["fill", <><u>F</u>ill</>, <rect x="1" y="2" width="10" height="9" fill="url(#blueGrad)" stroke="none" />],
    ["paint", "Stroke paint", <rect x="2" y="2" width="12" height="12" stroke="#999" />],
    ["style", "Stroke style", <path d="M1 4h13M1 8h13M1 12h13" stroke="#555" strokeWidth="1.500" />],
  ];
  return (
    <div className="absolute left-[659px] top-[108px] w-[260px] border border-[#777] bg-[#efefef] shadow-[0_4px_14px_rgba(0,0,0,0.45)]">
      <div className="flex h-[23px] items-center bg-white pl-1.5 pr-0.5">
        <Svg className="w-3.5 h-3.5">
          <path d="M8 1l7 6.500-3 1.500 1 2-3 1v2H6v-2l-3-1 1-2-3-1.500z" fill="#111" stroke="#111" />
          <path d="M8 2l3 3-2 1-1-1-1.500 1.500L5 5z" fill="#fff" stroke="none" />
        </Svg>
        <span className="ml-[3px] flex-1 whitespace-nowrap">Fill and Stroke (Shift+Ctrl+F)</span>
        {[
          ["Minimize", "M1 5.500h9"],
          ["Maximize", "M1.500 1.500h8v8h-8z"],
          ["Close", "M1 1l9 9M10 1l-9 9"],
        ].map(([name, d]) => (
          <button key={name} aria-label={name} className="flex h-full w-9 items-center justify-center">
            <Svg box={11} className="w-[11px] h-[11px]"><path d={d} stroke="#222" strokeWidth="1" /></Svg>
          </button>
        ))}
      </div>
      <DockHeader title="Fill and Stroke (Shift+Ctrl+F)" icon={commandIcons[26][1]} />
      <div className="px-1 pb-1.5 pt-1.5">
        <div role="tablist" className="flex h-[18px]">
          {tabs.map(([key, label, icon]) => (
            <button
              key={key}
              role="tab"
              aria-selected={tab === key}
              onClick={() => setTab(key)}
              className={clsx("flex items-center gap-0.5 border-r border-t border-[#d9d9d9] pl-0.5 pr-1", tab === key ? "bg-white" : "bg-[#efefef]")}
            >
              <Svg className="w-2.5 h-2.5">{icon}</Svg>
              <span>{label}</span>
            </button>
          ))}
        </div>
        <div className="h-[202px] border border-[#dcdcdc] bg-white px-[5px] pt-[5px]">
          <div className="flex items-center">
            {paintTypes.map(([name, icon], i) => (
              <button key={name} aria-label={name} className="flex h-6 w-6 items-center justify-center">
                <span className={clsx("flex h-5 w-5 items-center justify-center", i === 0 && "border border-dashed border-[#335] bg-[#eaf4fd]")}>
                  <Svg box={20} className="w-5 h-5">{icon}</Svg>
                </span>
              </button>
            ))}
            <span className="flex-1" />
            <button aria-label="Fill rule even-odd" className="flex h-6 w-4 items-center justify-center">
              <Svg className="w-2.5 h-2.5"><path d="M3 2v7c0 3 2 5 5 5s5-2 5-5V2l-3 2v4c0 3-4 3-4 0V4z" fill="#111" stroke="#111" /></Svg>
            </button>
            <button aria-label="Fill rule nonzero" className="flex h-6 w-4 items-center justify-center border border-[#99d1ff] bg-[#cce8ff]">
              <Svg className="w-2.5 h-2.5"><path d="M2 2l3 2h6l3-2v7c0 3-3 6-6 6S2 12 2 9z" fill="#111" stroke="#111" /></Svg>
            </button>
          </div>
          <div className="mt-2 font-bold">No paint</div>
        </div>
        <div className="mt-[3px] flex h-[19px]">
          <div className="flex flex-1 items-center border border-[#b5b5b5] bg-white px-1 pr-0.5">
            <label htmlFor="blur" className="flex-1">Blur (%)</label>
            <input id="blur" defaultValue="0,0" className="w-10 text-right outline-none" />
          </div>
          <Spinner />
        </div>
        <div className="mt-[3px] flex h-[19px]">
          <div className="flex flex-1 border border-[#b5b5b5] bg-white p-px">
            <div className="flex flex-1 items-center border-b border-[#111] bg-[#b4c2ce] pl-[3px]">
              <label htmlFor="opacity" className="flex-1">Opacity (%)</label>
              <input id="opacity" defaultValue="100,0" className="w-10 border-r border-black text-right outline-none" />
            </div>
          </div>
          <Spinner />
        </div>
      </div>
      <div role="tooltip" className="absolute left-[38px] top-[101px] border border-black bg-[#ffffe1] px-px leading-[14px] shadow-[2px_2px_2px_rgba(0,0,0,0.4)]">
        No paint
      </div>
      <svg viewBox="0 0 12 18" className="absolute left-[25px] top-[85px] h-[18px] w-3">
        <path d="M1 1v13l3-3 2.500 5.500 2.500-1L6.500 10H11z" fill="#fff" stroke="#000" />
      </svg>
    </div>
  );
}

// ---------- dock ----------

function GlyphRow({ icons, group }) {
  return (
    <div className="flex h-[27px] items-center justify-end">
      {icons.map((icon, i) => (
        <button key={i} aria-label={`${group} ${i + 1}`} className="flex h-[27px] w-[27px] items-center justify-center">
          {icon}
        </button>
      ))}
    </div>
  );
}

function AlignDock() {
  return (
    <aside className="w-[260px] shrink-0 border-l-2 border-t-2 border-l-black border-t-[#777] bg-[#eeeeee]">
      <DockHeader title="Align and Distribute (Shift+Ctrl+A)" icon={commandIcons[30][1]} />
      <div className="border-b border-[#f8f8f8] bg-[#efefef] pb-2 pl-[7px] pr-2">
        <h2 className="flex h-5 items-center font-bold">Align</h2>
        <div className="flex h-4 items-center justify-end gap-0.5">
          <label htmlFor="relative">Relative to:</label>
          <Select id="relative" value="Page" width="w-[94px]" />
        </div>
        <div className="flex h-[17px] items-center justify-end gap-1.5">
          <label htmlFor="as-group"><u>T</u>reat selection as group:</label>
          <input id="as-group" type="checkbox" className="mr-0.5 h-[11px] w-[11px] appearance-none border border-[#333] bg-white" />
        </div>
        {alignRows.map((r, i) => <GlyphRow key={i} icons={r} group="Align" />)}
        <h2 className="flex h-5 items-center font-bold">Distribute</h2>
        {distributeRows.map((r, i) => <GlyphRow key={i} icons={r} group="Distribute" />)}
        <h2 className="flex h-5 items-center font-bold">Rearrange</h2>
        <GlyphRow icons={rearrangeIcons} group="Rearrange" />
        <h2 className="flex h-6 items-center font-bold">Remove overlaps</h2>
        <div className="flex h-5 items-center justify-end gap-[3px]">
          <SpinField id="gap-h" label={<><u>H</u>:</>} value="0,0" width="w-[38px]" height="h-[17px]" />
          <SpinField id="gap-v" label={<><u>V</u>:</>} value="0,0" width="w-[38px]" height="h-[17px]" />
          <button aria-label="Remove overlaps" className="flex h-5 w-[27px] items-center justify-center">
            <BarIcon bars={[[0, 0, 6, 6], [0, 7, 6, 12], [7, 0, 7, 19], [15, 0, 4, 19]]} />
          </button>
        </div>
      </div>
    </aside>
  );
}

export default function App() {
  const [tool, setTool] = useState("Select");

  return (
    <div className="flex h-screen flex-col overflow-hidden bg-[#efefef] font-['Noto_Sans','Open_Sans',sans-serif] text-[9px] leading-none text-[#111]">
      {/* gradients shared by the icons */}
      <svg className="absolute h-0 w-0">
        <defs>
          <linearGradient id="blueGrad" x1="0" y1="0" x2="1" y2="1">
            <stop offset="0" stopColor="#8fb0d4" />
            <stop offset="1" stopColor="#f2f7fb" />
          </linearGradient>
          <radialGradient id="radGrad">
            <stop offset="0" stopColor="#f2f7fb" />
            <stop offset="1" stopColor="#8fb0d8" />
          </radialGradient>
          <linearGradient id="pinkGrad" x1="0" y1="0" x2="1" y2="1">
            <stop offset="0" stopColor="#f6a9b4" />
            <stop offset="1" stopColor="#fdf0f2" />
          </linearGradient>
          <linearGradient id="greenGrad">
            <stop offset="0" stopColor="#4fae6b" />
            <stop offset="1" stopColor="#e4f5e6" />
          </linearGradient>
        </defs>
      </svg>

      <nav className="flex h-3.5 shrink-0 items-center gap-[11px] bg-white pl-1.5">
        {MENUS.map(([a, key, b]) => (
          <button key={a + key + b}>{a}<u>{key}</u>{b}</button>
        ))}
      </nav>

      <div className="flex h-[25px] shrink-0 items-center border-t border-[#ececec] bg-white pl-0.5">
        <IconButtons items={commandIcons} />
      </div>

      <div className="flex h-[25px] shrink-0 items-center border-t border-[#e4e4e4] bg-white pl-0.5">
        <IconButtons items={selectIcons} />
        <Divider />
        <SpinField id="x" label="X:" value="21,951" className="ml-[5px]" />
        <SpinField id="y" label="Y:" value="35,170" className="ml-[5px]" />
        <SpinField id="w" label="W:" value="259,971" className="ml-1.5" />
        <button aria-label="Lock ratio" className="flex w-6 justify-center"><Padlock fill="#ddd" open /></button>
        <SpinField id="h" label="H:" value="530,527" className="ml-0.5" />
        <Select value="mm" width="w-[34px]" className="ml-px" aria-label="Units" />
        <Divider />
        <div className="flex">
          {affectIcons.map(([name, d]) => (
            <button key={name} aria-label={name} className="flex h-[21px] w-[21px] items-center justify-center border border-[#a5d4f7] bg-[#cce8ff]">
              <Svg className="w-[9px] h-[9px]"><path d={d} strokeWidth="2" /><path d="M7 9h7v6l-7-3z" fill="#444" stroke="none" /></Svg>
            </button>
          ))}
        </div>
      </div>

      <div className="flex min-h-0 flex-1">
        <div className="flex w-7 shrink-0 flex-col items-center overflow-hidden bg-white pt-0.5">
          {toolIcons.map(([name, art]) => (
            <button
              key={name}
              aria-label={name}
              onClick={() => setTool(name)}
              className={clsx("flex h-6 w-6 shrink-0 items-center justify-center", tool === name && "border border-[#a5d4f7] bg-[#cce8ff]")}
            >
              <Svg box={24} className="w-5 h-5">{art}</Svg>
            </button>
          ))}
        </div>

        <div className="flex w-3 shrink-0 flex-col">
          <div className="flex h-[13px] items-center justify-center"><Padlock /></div>
          <VerticalRuler />
          <div className="h-3.5" />
        </div>

        <main className="flex min-w-0 flex-1 flex-col">
          <HorizontalRuler />
          <div className="relative min-h-0 flex-1 overflow-hidden bg-white">
            <Artwork />
            <FillStrokeDialog />
          </div>
          <div className="flex h-3.5 items-center">
            <span className="flex w-[15px] justify-center"><Chevron dir="left" color="#aaa" /></span>
            <span className="h-3 flex-1 bg-[#cdcdcd]" />
            <span className="flex w-[13px] justify-center"><Chevron dir="right" color="#999" /></span>
          </div>
        </main>

        <div className="mr-[5px] flex w-[13px] shrink-0 flex-col items-center">
          <button aria-label="Zoom with window" className="flex h-[13px] w-[13px] items-center justify-center bg-[#cce8ff]">
            <Svg className="w-[9px] h-[9px]"><circle cx="7" cy="7" r="5" stroke="#57a" strokeWidth="2" /><path d="M11 11l4 4" strokeWidth="2" /></Svg>
          </button>
          <span className="flex h-3.5 items-center"><Chevron dir="up" color="#444" /></span>
          <span className="flex-[190]" />
          <span className="w-3 flex-[290] bg-[#cdcdcd]" />
          <span className="flex-[163]" />
          <span className="flex h-3.5 items-center"><Chevron color="#444" /></span>
          <span className="flex h-3.5 items-center">
            <Svg className="w-2 h-2"><path d="M2 2l6 5-6 6z" fill="#e04040" stroke="none" /><path d="M4 1l11 7-8 2z" fill="#3bb37a" stroke="none" /><path d="M3 9l8 1-8 5z" fill="#4468d0" stroke="none" /></Svg>
          </span>
        </div>

        <AlignDock />

        <div className="flex w-[25px] shrink-0 flex-col items-center overflow-hidden bg-white pt-0.5">
          <IconButtons items={snapIcons} vertical />
        </div>
      </div>

      <div className="flex h-3 shrink-0 border-t border-black pr-[9px]">
        <button aria-label="No color" className="w-[13px] bg-white">
          <svg viewBox="0 0 13 11" className="h-[11px] w-[13px]"><path d="M1 0l11 11M12 0L1 11" stroke="#8a1f1f" strokeWidth="1.200" /></svg>
        </button>
        {PALETTE.map((c, i) => (
          <button key={i} aria-label={`#${c}`} className="min-w-0 flex-1" style={{ backgroundColor: `#${c}` }} />
        ))}
        <svg viewBox="0 0 4 6" className="-mr-2 ml-1 h-1.5 w-1"><path d="M4 0v6L0 3z" /></svg>
      </div>

      <div className="mt-[3px] flex h-[13px] shrink-0 items-center">
        <span className="flex w-[11px] justify-center"><Chevron dir="left" color="#aaa" /></span>
        <span className="h-3 w-[31%] bg-[#cdcdcd]" />
        <span className="flex-1" />
        <span className="flex w-7 justify-center"><Chevron dir="right" color="#444" /></span>
      </div>

      <footer className="flex h-[21px] shrink-0 items-center">
        <div className="grid w-[98px] grid-cols-[32px_1fr] pl-0.5 leading-[11px]">
          <span>Fill:</span>
          <span className="text-center italic">None</span>
          <span>Stroke:</span>
          <span className="text-center font-bold">Unset</span>
        </div>
        <SpinField id="o" label="O:" value="0" width="w-[29px]" className="ml-0.5" />
        <span className="ml-px h-5 w-px bg-[#aaa]" />
        <button aria-label="Toggle layer visibility" className="ml-0.5 flex w-4 justify-center">
          <Svg className="w-2.5 h-2.5"><path d="M1 8c3-5 11-5 14 0-3 5-11 5-14 0z" fill="#aaa" stroke="#777" /><circle cx="8" cy="8" r="3" fill="#333" /></Svg>
        </button>
        <button aria-label="Toggle layer lock" className="flex w-4 justify-center"><Padlock fill="#cfd07a" open /></button>
        <div className="relative flex h-5">
          <select aria-label="Layer" className="w-[53px] appearance-none bg-white pl-0.5 text-[8px] font-bold outline-none">
            <option>•Layer 1</option>
          </select>
          <span className="pointer-events-none absolute inset-y-0 right-0 flex w-[13px] items-center justify-center border border-[#aaa] bg-[#e1e1e1]">
            <Chevron />
          </span>
        </div>
        <p className="ml-0.5 flex-1 whitespace-nowrap">
          <b>Group</b> of <b>5</b> objects in layer <b>Layer 1</b>. Click selection to toggle scale/rotation handles.
        </p>
        <div className="grid grid-cols-[15px_34px] border-l border-[#999] pl-0.5 leading-[11px]">
          <span>X:</span>
          <span className="font-['Liberation_Mono',monospace]">365,14</span>
          <span>Y:</span>
          <span className="font-['Liberation_Mono',monospace]">544,59</span>
        </div>
        <SpinField id="z" label="Z:" value="  26%" className="ml-1.5 mr-0.5" />
      </footer>
    </div>
  );
}
